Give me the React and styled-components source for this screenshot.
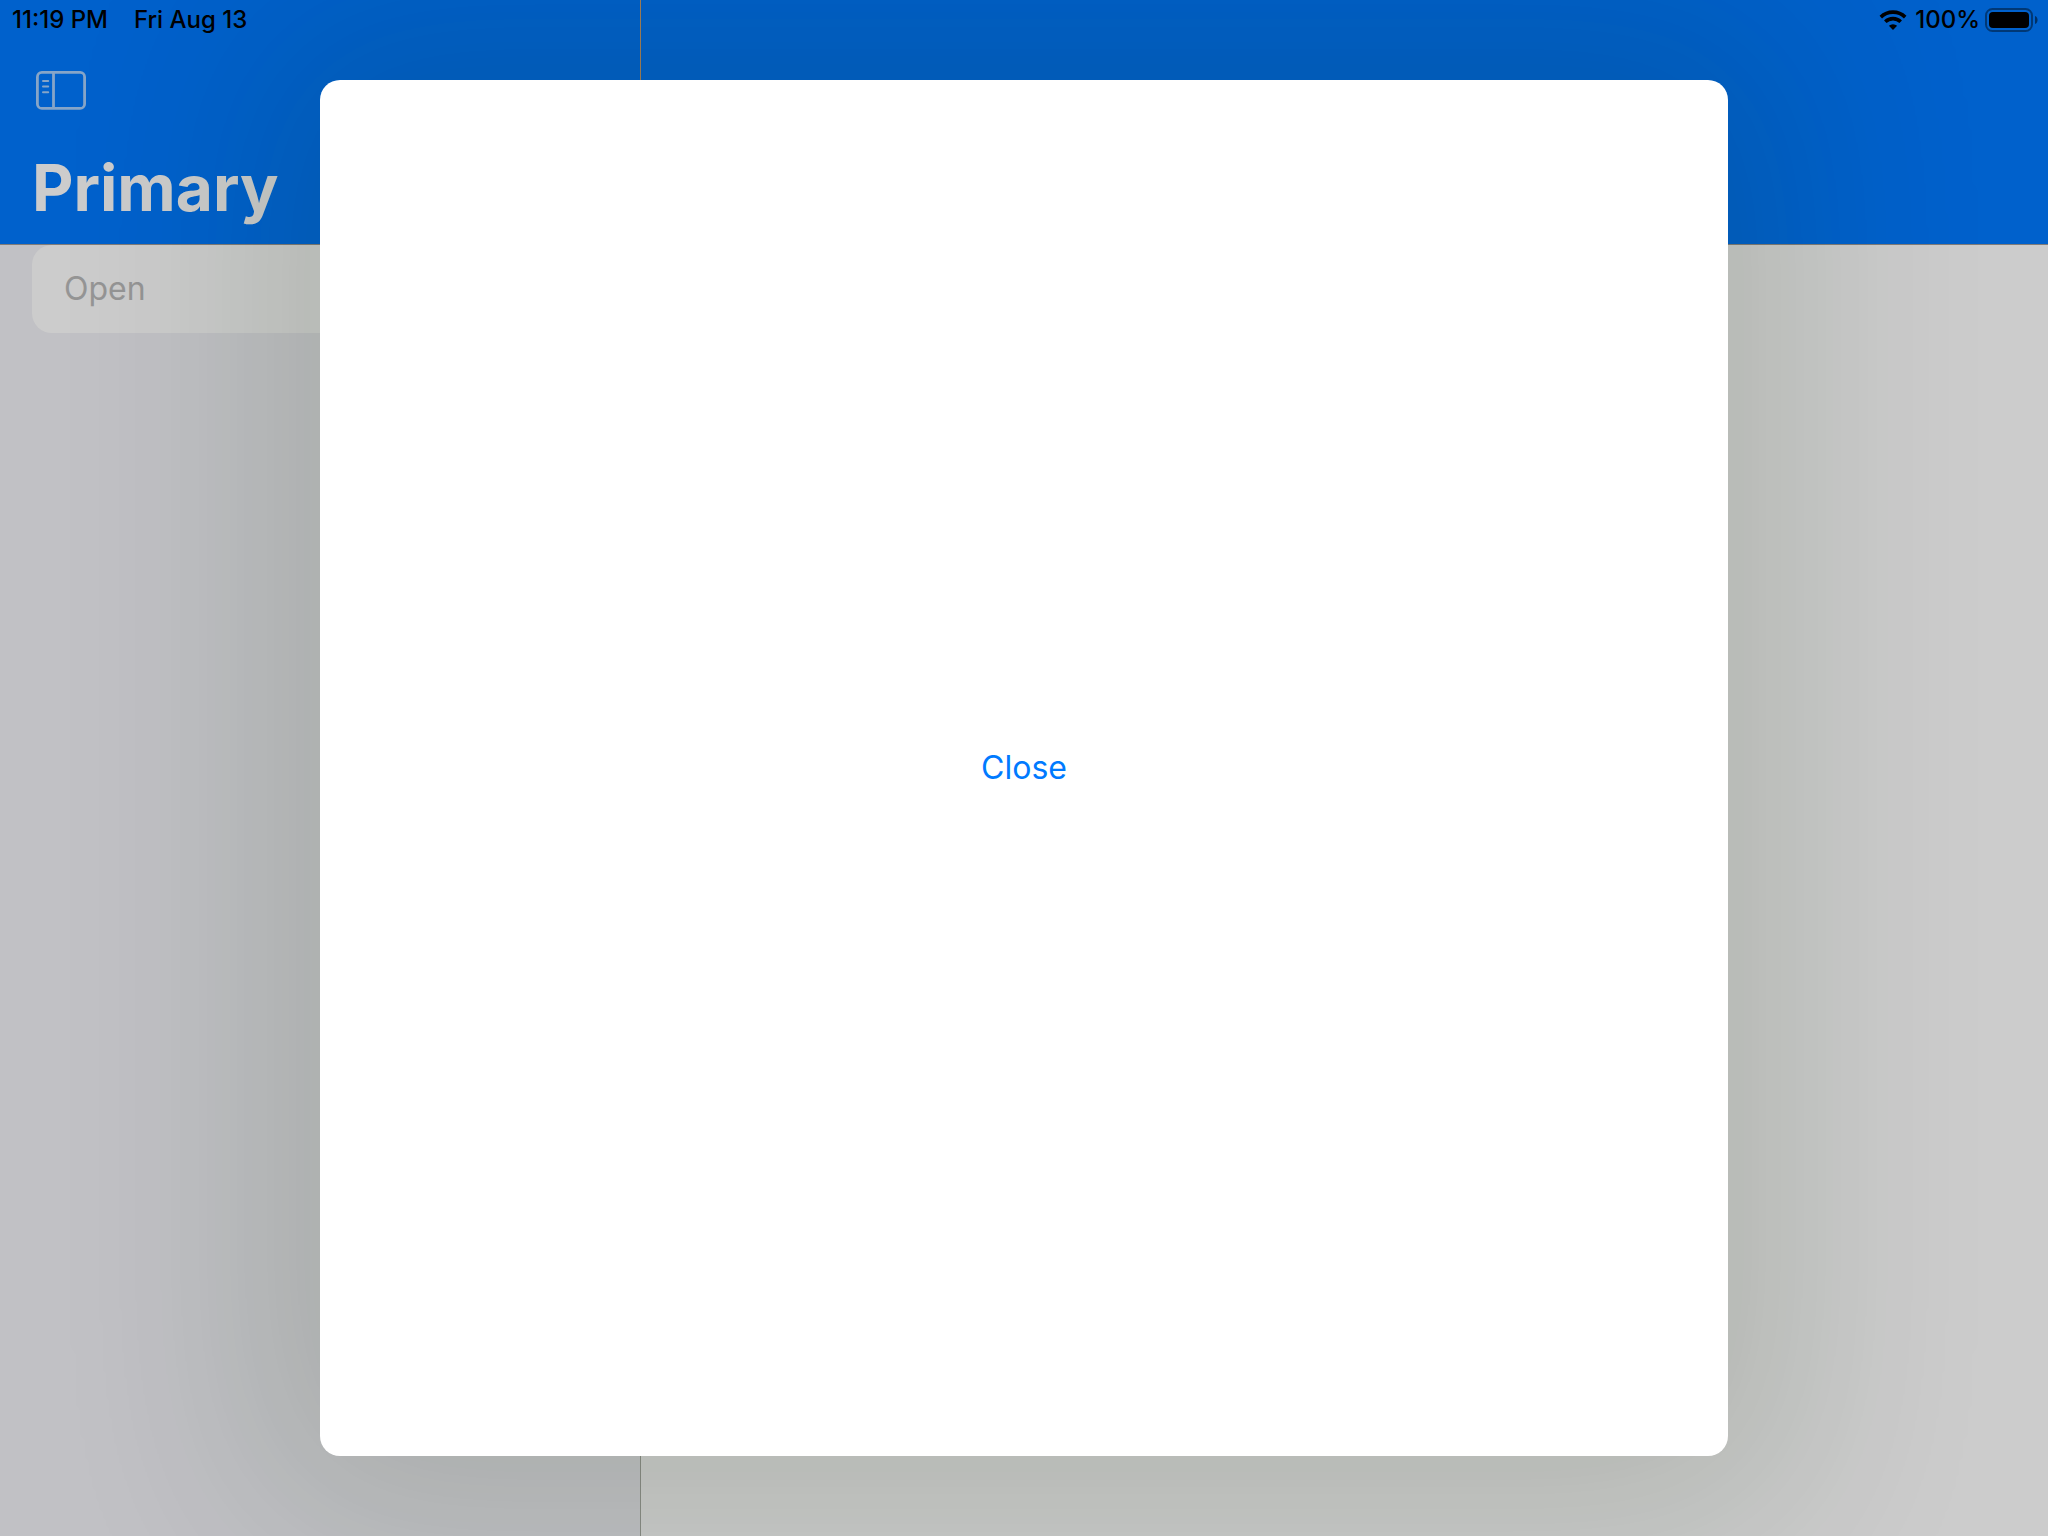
import React, { useState } from 'react';
import styled, { createGlobalStyle } from 'styled-components';

const GlobalStyle = createGlobalStyle`
  *, *::before, *::after { box-sizing: border-box; }
  html, body { margin: 0; }
  body {
    font-family: Inter, Roboto, "Liberation Sans", sans-serif;
    -webkit-font-smoothing: antialiased;
  }
  button { font-family: inherit; border: 0; padding: 0; background: none; cursor: pointer; }
`;

const Screen = styled.div`
  position: relative;
  display: flex;
  min-height: 100vh;
`;

const Column = styled.section`
  display: flex;
  flex-direction: column;
  flex: ${({ $wide }) => ($wide ? '1' : '0 0 640px')};
  background: ${({ $wide }) => ($wide ? '#ffffff' : '#f2f2f7')};
`;

const Divider = styled.div`
  flex: 0 0 1px;
  background: linear-gradient(#d0a070 0 245px, #adb0a8 245px);
`;

const NavBar = styled.header`
  display: flex;
  flex-direction: column;
  justify-content: space-between;
  height: 245px;
  padding: 70px 32px 20px;
  background: #007aff;
  border-bottom: 1px solid #a09c98;
`;

const IconButton = styled.button`
  display: flex;
  align-self: flex-start;
  padding: 0 4px;
  color: #a8cffa;
`;

const Title = styled.h1`
  margin: 0;
  color: #ffffff;
  font-size: 64px;
  font-weight: 700;
  line-height: 72px;
`;

const List = styled.ul`
  margin: 0;
  padding: 0 32px;
  list-style: none;
`;

const Row = styled.button`
  width: 100%;
  height: 88px;
  padding: 0 32px;
  border-radius: 20px;
  background: #ffffff;
  color: #bbbbbb;
  font-size: 32px;
  line-height: 40px;
  text-align: left;
`;

const StatusBar = styled.div`
  position: absolute;
  inset: 0 0 auto;
  display: flex;
  align-items: center;
  justify-content: space-between;
  height: 40px;
  padding: 0 10px 0 12px;
  color: #000000;
  font-size: 24px;
  font-weight: 500;
  line-height: 40px;
`;

const StatusGroup = styled.div`
  display: flex;
  align-items: center;
  gap: ${({ $gap }) => $gap}px;
`;

const Backdrop = styled.div`
  position: absolute;
  inset: 0;
  display: flex;
  justify-content: center;
  padding: 80px 320px;
  overflow: hidden;
  background: rgba(0, 0, 0, 0.2);
`;

const Dialog = styled.div`
  flex: 1;
  display: flex;
  align-items: center;
  justify-content: center;
  border-radius: 20px;
  background: #ffffff;
  box-shadow: 0 0 208px 60px rgba(16, 45, 4, 0.14);
`;

const CloseButton = styled.button`
  color: #007aff;
  font-size: 32px;
  line-height: 40px;
`;

const SidebarIcon = () => (
  <svg width="50" height="40" viewBox="0 0 50 40" fill="none" stroke="currentColor" aria-hidden="true">
    <rect x="1.4" y="2.4" width="47.2" height="36" rx="4.5" strokeWidth="2.8" />
    <path d="M17.5 2.5v36" strokeWidth="2.8" />
    <path d="M7 11h5.2M7 16.6h5.2M7 22.2h5.2" strokeWidth="2" strokeLinecap="round" />
  </svg>
);

const WifiIcon = () => (
  <svg width="31" height="20" viewBox="0 0 31 20" aria-hidden="true">
    <path d="M1.8 7.1a17.4 17.4 0 0 1 24.4 0" fill="none" stroke="#000" strokeWidth="3.6" />
    <path d="M6.3 11.8a11 11 0 0 1 15.4 0" fill="none" stroke="#000" strokeWidth="3.6" />
    <path d="M14 20l-4.1-4.2a5.9 5.9 0 0 1 8.2 0z" fill="#000" />
  </svg>
);

const BatteryIcon = () => (
  <svg width="53" height="24" viewBox="0 0 53 24" aria-hidden="true">
    <rect x="1" y="1" width="46" height="22" rx="6.5" fill="none" stroke="#000" strokeOpacity="0.42" strokeWidth="2" />
    <rect x="4" y="4" width="40" height="16" rx="4" fill="#000" />
    <path d="M50 8c3.4 1 3.4 7 0 8z" fill="#000" fillOpacity="0.5" />
  </svg>
);

export default function App() {
  const [open, setOpen] = useState(true);
  return (
    <>
      <GlobalStyle />
      <Screen>
        <Column>
          <NavBar>
            <IconButton type="button" aria-label="Toggle sidebar">
              <SidebarIcon />
            </IconButton>
            <Title>Primary</Title>
          </NavBar>
          <List>
            <li>
              <Row type="button" onClick={() => setOpen(true)}>Open</Row>
            </li>
          </List>
        </Column>
        <Divider />
        <Column $wide>
          <NavBar />
        </Column>
        <StatusBar>
          <StatusGroup $gap={26}>
            <time>11:19 PM</time>
            <time>Fri Aug 13</time>
          </StatusGroup>
          <StatusGroup $gap={5}>
            <WifiIcon />
            <span>100%</span>
            <BatteryIcon />
          </StatusGroup>
        </StatusBar>
        {open && (
          <Backdrop>
            <Dialog role="dialog" aria-modal="true" aria-label="Secondary">
              <CloseButton type="button" onClick={() => setOpen(false)}>Close</CloseButton>
            </Dialog>
          </Backdrop>
        )}
      </Screen>
    </>
  );
}
